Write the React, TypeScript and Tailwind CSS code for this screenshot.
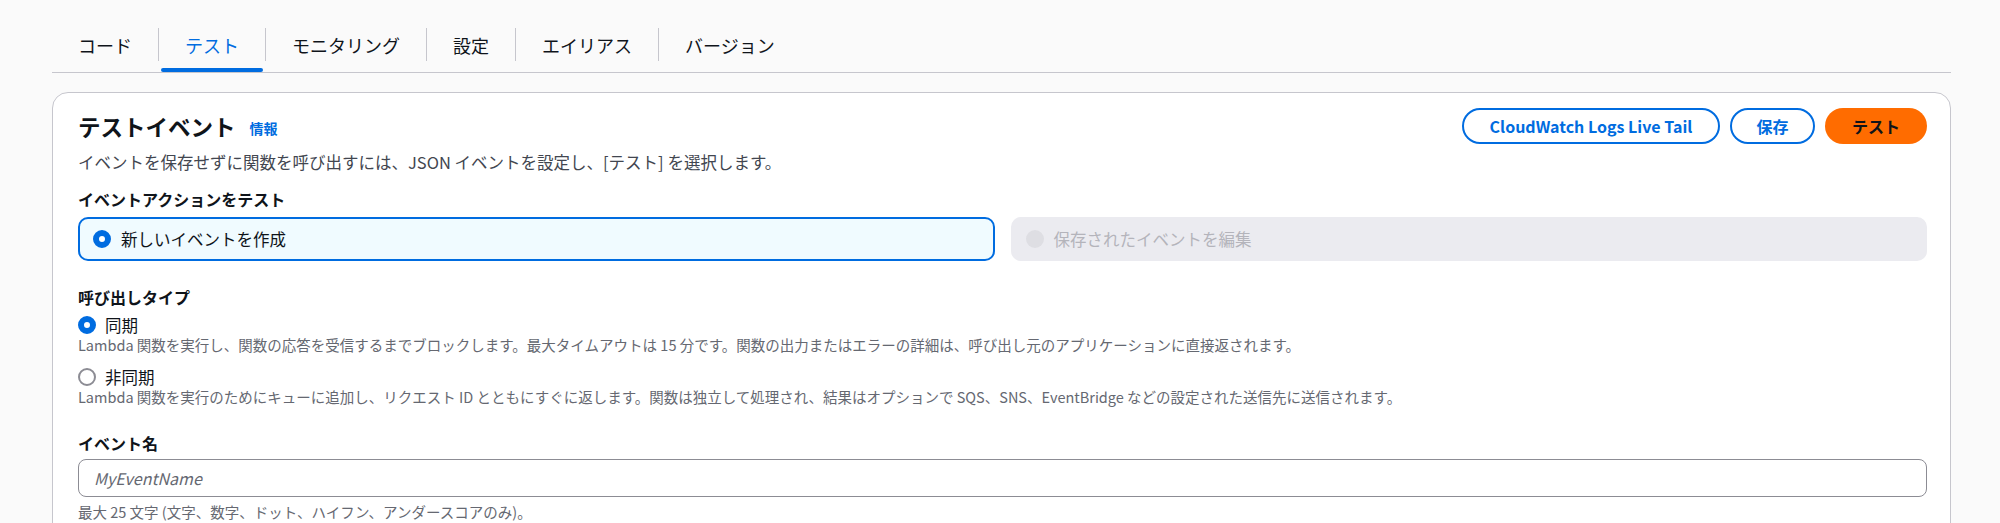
import { useState } from "react";

const TABS = ["コード", "テスト", "モニタリング", "設定", "エイリアス", "バージョン"];

const labelCls = "text-[16px] font-bold leading-[24px] text-[#0f141a]";
const hintCls = "text-[14.5px] leading-[18px] text-[#656871]";

function Radio({ checked, disabled }: { checked?: boolean; disabled?: boolean }) {
  if (disabled) return <span className="h-[18px] w-[18px] shrink-0 rounded-full bg-[#dedee3]" />;
  if (checked)
    return <span className="h-[18px] w-[18px] shrink-0 rounded-full border-[6px] border-[#006ce0] bg-white" />;
  return <span className="h-[18px] w-[18px] shrink-0 rounded-full border-2 border-[#8c8c94] bg-white" />;
}

export default function App() {
  const [tab, setTab] = useState(1);
  const [modo, setModo] = useState<"sync" | "async">("sync");

  return (
    <div className="min-h-screen bg-[#fafafa] pl-[52px] pr-[49px] font-['Noto_Sans_CJK_JP',sans-serif] text-[#0f141a]">
      {/* abas */}
      <div className="flex border-b border-[#c6c6cd]">
        {TABS.map((t, i) => (
          <div key={t} className="flex">
            {i > 0 && <span className="mt-[28px] h-[33px] w-px bg-[#c6c6cd]" />}
            <button
              type="button"
              onClick={() => setTab(i)}
              className="flex h-[72px] flex-col px-[26px] pt-[28px]"
            >
              <span
                className={`flex h-[34px] items-center text-[18px] ${
                  tab === i ? "text-[#006ce0]" : "text-[#0f141a]"
                }`}
              >
                {t}
              </span>
              <span
                className={`-mx-[24px] mt-[6px] h-[4px] self-stretch rounded-full ${
                  tab === i ? "bg-[#006ce0]" : "bg-transparent"
                }`}
              />
            </button>
          </div>
        ))}
      </div>

      <div className="mt-[19px] rounded-[16px] border border-[#c6c6cd] bg-white pb-[40px] pl-[25px] pr-[23px] pt-[15px]">
        <div className="flex items-start justify-between">
          <div className="flex h-[36px] items-center gap-[14px]">
            <h2 className="text-[22.5px] font-bold leading-[28px]">テストイベント</h2>
            <a className="mt-[4px] text-[14px] font-bold text-[#006ce0]">情報</a>
          </div>
          <div className="flex gap-[10px]">
            <button
              type="button"
              className="flex h-[36px] w-[258px] items-center justify-center rounded-full border-2 border-[#006ce0] text-[16px] font-bold text-[#006ce0]"
            >
              CloudWatch Logs Live Tail
            </button>
            <button
              type="button"
              className="flex h-[36px] w-[85px] items-center justify-center rounded-full border-2 border-[#006ce0] text-[16px] font-bold text-[#006ce0]"
            >
              保存
            </button>
            <button
              type="button"
              className="flex h-[36px] w-[102px] items-center justify-center rounded-full bg-[#ff6c00] text-[16px] font-bold text-[#0f141a]"
            >
              テスト
            </button>
          </div>
        </div>

        <p className="mt-[6px] text-[16.5px] leading-[24px] text-[#424650]">
          イベントを保存せずに関数を呼び出すには、JSON イベントを設定し、[テスト] を選択します。
        </p>

        <p className={`${labelCls} mt-[13px]`}>イベントアクションをテスト</p>
        <div className="mt-[6px] grid grid-cols-2 gap-4">
          <div className="flex h-[44px] items-center gap-[10px] rounded-[10px] border-2 border-[#006ce0] bg-[#f0fbff] pl-[13px]">
            <Radio checked />
            <span className="text-[16.5px] text-[#0f141a]">新しいイベントを作成</span>
          </div>
          <div className="flex h-[44px] items-center gap-[10px] rounded-[10px] border-2 border-[#ebebf0] bg-[#ebebf0] pl-[13px]">
            <Radio disabled />
            <span className="text-[16.5px] text-[#b4b4bb]">保存されたイベントを編集</span>
          </div>
        </div>

        <p className={`${labelCls} mt-[24px]`}>呼び出しタイプ</p>
        <div className="mt-[5px]">
          <button type="button" onClick={() => setModo("sync")} className="flex items-center gap-[9px]">
            <Radio checked={modo === "sync"} />
            <span className="text-[16.5px] leading-[22px]">同期</span>
          </button>
          <p className={hintCls}>
            Lambda 関数を実行し、関数の応答を受信するまでブロックします。最大タイムアウトは 15
            分です。関数の出力またはエラーの詳細は、呼び出し元のアプリケーションに直接返されます。
          </p>
        </div>
        <div className="mt-[12px]">
          <button type="button" onClick={() => setModo("async")} className="flex items-center gap-[9px]">
            <Radio checked={modo === "async"} />
            <span className="text-[16.5px] leading-[22px]">非同期</span>
          </button>
          <p className={hintCls}>
            Lambda 関数を実行のためにキューに追加し、リクエスト ID
            とともにすぐに返します。関数は独立して処理され、結果はオプションで SQS、SNS、EventBridge
            などの設定された送信先に送信されます。
          </p>
        </div>

        <p className={`${labelCls} mt-[25px]`}>イベント名</p>
        <input
          className="mt-[4px] h-[38px] w-full rounded-[8px] border border-[#8c8c94] px-[15px] text-[16px] outline-none placeholder:italic placeholder:text-[#656871]"
          placeholder="MyEventName"
        />
        <p className={`${hintCls} mt-[6px]`}>最大 25 文字 (文字、数字、ドット、ハイフン、アンダースコアのみ)。</p>
      </div>
    </div>
  );
}
